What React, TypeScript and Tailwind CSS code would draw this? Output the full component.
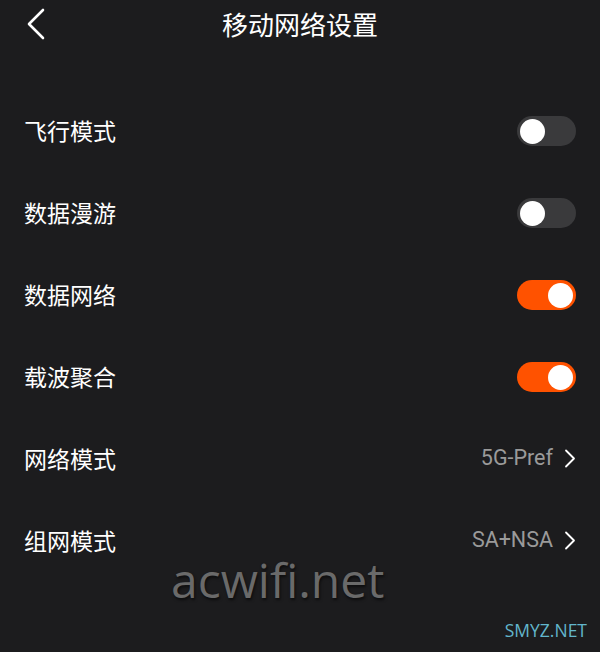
const rows: { label: string; kind: 'toggle' | 'link'; on?: boolean; value?: string }[] = [
  { label: '飞行模式', kind: 'toggle', on: false },
  { label: '数据漫游', kind: 'toggle', on: false },
  { label: '数据网络', kind: 'toggle', on: true },
  { label: '载波聚合', kind: 'toggle', on: true },
  { label: '网络模式', kind: 'link', value: '5G-Pref' },
  { label: '组网模式', kind: 'link', value: 'SA+NSA' },
]

function Toggle({ on }: { on: boolean }) {
  return (
    <div
      className={
        on
          ? 'w-[59px] h-[30px] rounded-full bg-[#ff5200] flex items-center justify-end px-[3px]'
          : 'w-[59px] h-[30px] rounded-full bg-[#3a3a3c] flex items-center justify-start px-[3px]'
      }
    >
      <div className="w-[25px] h-[25px] rounded-full bg-white" />
    </div>
  )
}

export default function App() {
  return (
    <div
      className="relative w-[600px] h-[652px] bg-[#1c1c1e] text-white overflow-hidden"
      style={{ fontFamily: '"Noto Sans CJK SC", "Noto Sans", sans-serif' }}
    >
      <div className="relative h-[48px] flex items-center justify-center">
        <svg className="absolute left-[24px] top-[8px]" width="24" height="32" viewBox="0 0 24 32">
          <path d="M19 2 L5 16 L19 30" fill="none" stroke="white" strokeWidth="2.6" strokeLinecap="round" strokeLinejoin="round" />
        </svg>
        <span className="text-[26px] leading-none">移动网络设置</span>
      </div>

      <div className="pt-[42px]">
        {rows.map((r) => (
          <div key={r.label} className="h-[82px] flex items-center justify-between pl-[24px] pr-[24px]">
            <span className="text-[23px] leading-none mt-[-2px]">{r.label}</span>
            {r.kind === 'toggle' ? (
              <Toggle on={!!r.on} />
            ) : (
              <div className="flex items-center gap-[11px] mt-[-2px]">
                <span className="text-[21.5px] text-[#9a9a9a]" style={{ fontFamily: 'Roboto, sans-serif' }}>
                  {r.value}
                </span>
                <svg width="12" height="19" viewBox="0 0 12 19">
                  <path d="M2 1.5 L10 9.5 L2 17.5" fill="none" stroke="white" strokeWidth="1.8" strokeLinecap="round" strokeLinejoin="round" />
                </svg>
              </div>
            )}
          </div>
        ))}
      </div>

      <div
        className="absolute left-[171px] top-[556px] text-[48px] text-[#6a6a6a] leading-none"
        style={{ fontFamily: '"Open Sans", sans-serif', textShadow: '1px 2px 3px rgba(0,0,0,0.6)' }}
      >
        acwifi.net
      </div>
      <div
        className="absolute right-[13px] top-[622px] text-[17.5px] text-[#62b6cc] leading-none"
        style={{ fontFamily: '"Open Sans", sans-serif' }}
      >
        SMYZ.NET
      </div>
    </div>
  )
}
